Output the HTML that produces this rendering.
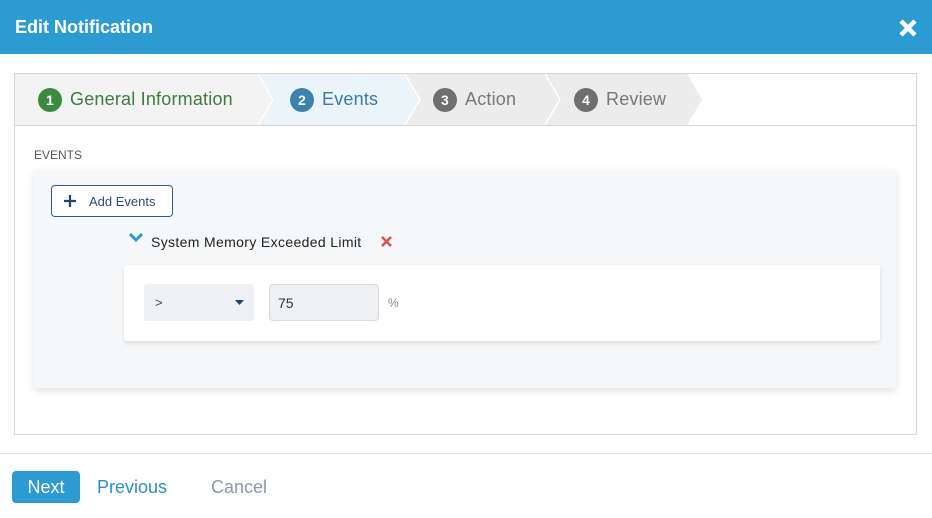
<!DOCTYPE html><html><head><style>
body{margin:0;width:932px;height:518px;background:#fff;font-family:"Liberation Sans",sans-serif;position:relative;overflow:hidden}
.a{position:absolute}
.hdr{left:0;top:0;width:932px;height:54px;background:#2b9bd1;color:#fff}
.tab{top:74px;height:51px;font-size:18px;display:flex;align-items:center;letter-spacing:0.2px}
.num{width:24px;height:24px;border-radius:50%;color:#fff;font-size:14px;font-weight:bold;display:flex;align-items:center;justify-content:center;margin-right:8px}
.sep{top:74px;height:51px}
</style></head><body>
<div class="a hdr"><div class="a" style="left:15px;top:17px;font-size:18px;font-weight:bold">Edit Notification</div>
<svg class="a" style="left:898px;top:18px" width="20" height="20"><path d="M3 3L17 17M17 3L3 17" stroke="#fff" stroke-width="4.5"/></svg></div>
<div class="a" style="left:14px;top:73px;width:901px;height:360px;border:1px solid #d6d6d6"></div>
<div class="a" style="left:15px;top:125px;width:901px;height:1px;background:#d6d6d6"></div>
<div class="a tab" style="left:15px;width:258px;background:#f3f3f3;clip-path:polygon(0 0,243px 0,258px 50%,243px 100%,0 100%);padding-left:23px;box-sizing:border-box;color:#3b7d3b"><span class="num" style="background:#3a8a3f">1</span>General Information</div>
<div class="a tab" style="left:258px;width:162px;background:#eaf4f9;clip-path:polygon(0 0,147px 0,162px 50%,147px 100%,0 100%,15px 50%);padding-left:32px;box-sizing:border-box;color:#3d7aa3"><span class="num" style="background:#3d82ae">2</span>Events</div>
<div class="a tab" style="left:405px;width:155px;background:#ececec;clip-path:polygon(0 0,140px 0,155px 50%,140px 100%,0 100%,15px 50%);padding-left:28px;box-sizing:border-box;color:#777"><span class="num" style="background:#6f6f6f">3</span>Action</div>
<div class="a tab" style="left:545px;width:158px;background:#ececec;clip-path:polygon(0 0,143px 0,158px 50%,143px 100%,0 100%,15px 50%);padding-left:29px;box-sizing:border-box;color:#777"><span class="num" style="background:#6f6f6f">4</span>Review</div>
<svg class="a sep" style="left:256px" width="450" height="51"><g stroke="#fff" stroke-width="1.5" fill="none"><path d="M2 0L17 25.5L2 51"/><path d="M149 0L164 25.5L149 51"/><path d="M289 0L304 25.5L289 51"/><path d="M432 0L447 25.5L432 51"/></g></svg>
<div class="a" style="left:34px;top:148px;font-size:12px;color:#555">EVENTS</div>
<div class="a" style="left:34px;top:170px;width:862px;height:218px;background:#f6f7f9;box-shadow:0 3px 8px rgba(0,0,0,.12)"></div>
<div class="a" style="left:51px;top:185px;width:122px;height:32px;border:1px solid #2d5c88;border-radius:4px;background:#fff;font-size:13px;color:#2d4f70;box-sizing:border-box;padding:8px 0 0 37px">Add Events</div>
<svg class="a" style="left:64px;top:195px" width="12" height="12"><path d="M6 0V12M0 6H12" stroke="#1d4571" stroke-width="2.2"/></svg>
<svg class="a" style="left:129px;top:232px" width="14" height="10"><path d="M1 2L7 8L13 2" stroke="#2b9bd1" stroke-width="3" fill="none"/></svg>
<div class="a" style="left:151px;top:234px;font-size:14px;color:#222;letter-spacing:0.35px">System Memory Exceeded Limit</div>
<svg class="a" style="left:381px;top:236px" width="11" height="11"><path d="M1 1L10 10M10 1L1 10" stroke="#d9534f" stroke-width="2.6"/></svg>
<div class="a" style="left:124px;top:265px;width:756px;height:76px;background:#fff;border-radius:3px;box-shadow:0 2px 5px rgba(0,0,0,.12)"></div>
<div class="a" style="left:144px;top:284px;width:110px;height:37px;background:#eef0f3;border-radius:3px;font-size:13px;color:#2d4f70;box-sizing:border-box;padding:11px 0 0 11px">&gt;</div>
<svg class="a" style="left:235px;top:300px" width="9" height="6"><path d="M0 0H9L4.5 5Z" fill="#1d4571"/></svg>
<div class="a" style="left:269px;top:284px;width:110px;height:37px;background:#eef0f3;border:1px solid #d8dbe0;border-radius:4px;font-size:14px;color:#333;box-sizing:border-box;padding:10px 0 0 8px">75</div>
<div class="a" style="left:388px;top:296px;font-size:12px;color:#888">%</div>
<div class="a" style="left:0;top:453px;width:932px;height:1px;background:#e2e2e2"></div>
<div class="a" style="left:12px;top:471px;width:68px;height:32px;background:#2b9bd1;border-radius:4px;color:#fff;font-size:18px;text-align:center;line-height:32px">Next</div>
<div class="a" style="left:97px;top:477px;font-size:18px;color:#2b8fc7">Previous</div>
<div class="a" style="left:211px;top:477px;font-size:18px;color:#8a98a8">Cancel</div>
</body></html>
